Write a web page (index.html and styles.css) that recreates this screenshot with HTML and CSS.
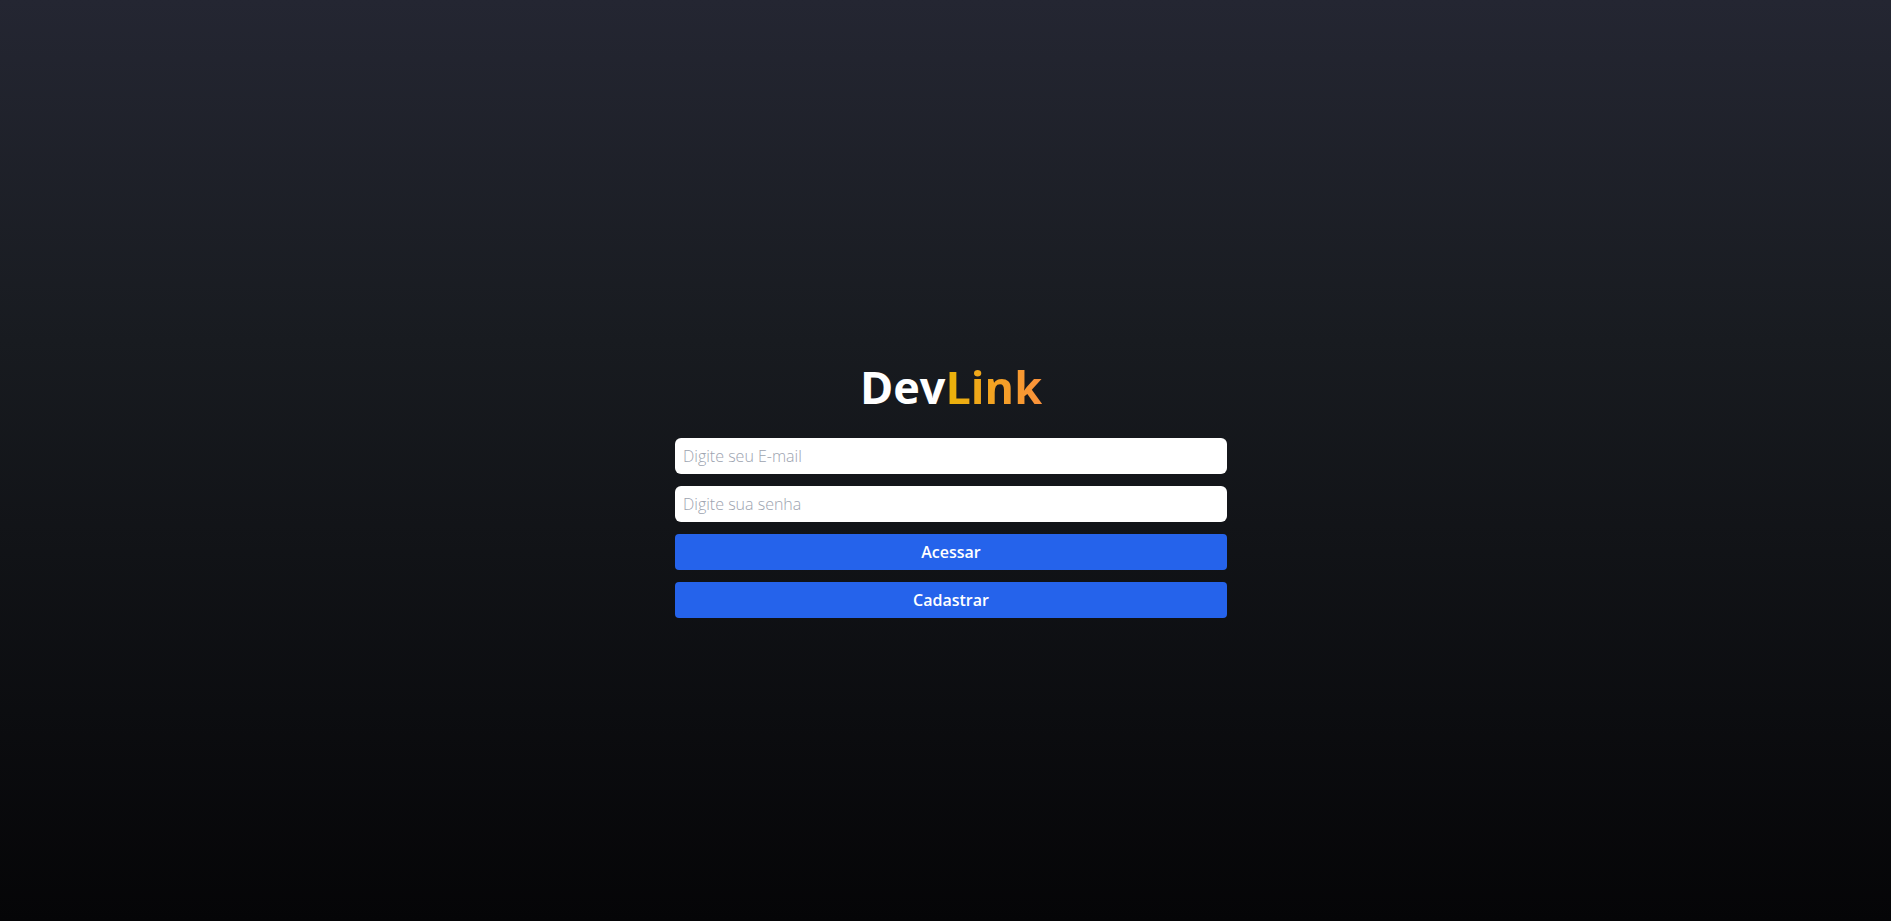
FILE: index.html
```
<!DOCTYPE html>
<html lang="pt-BR">
<head>
    <meta charset="UTF-8">
    <meta name="viewport" content="width=device-width, initial-scale=1.0">
    <title>DevLink</title>
    <link rel="stylesheet" href="styles.css">
</head>
<body>

<main class="login">
    <h1 class="logo">Dev<span>Link</span></h1>

    <form class="login-form">
        <input type="email" name="email" placeholder="Digite seu E-mail" aria-label="E-mail">
        <input type="password" name="password" placeholder="Digite sua senha" aria-label="Senha">
        <button type="submit">Acessar</button>
        <button type="button">Cadastrar</button>
    </form>
</main>

</body>
</html>
```

FILE: styles.css
```
* {
    box-sizing: border-box;
}

body {
    margin: 0;
    font-family: "Open Sans", "Noto Sans", sans-serif;
    font-size: 16px;
    line-height: 24px;
    background: linear-gradient(#242632, #181b20 37%, #050507);
}

.login {
    display: flex;
    flex-direction: column;
    align-items: center;
    justify-content: center;
    min-height: 100vh;
    padding: 60px 0 0 11px;
}

.logo {
    margin: 0 0 28px;
    color: white;
    font-size: 45px;
    font-weight: 700;
    line-height: 46px;
}

.logo span {
    background: linear-gradient(to right, #eab308, #fb923c);
    background-clip: text;
    -webkit-background-clip: text;
    color: transparent;
}

.login-form {
    display: flex;
    flex-direction: column;
    gap: 12px;
    width: 100%;
    max-width: 552px;
}

.login-form input,
.login-form button {
    height: 36px;
    padding: 0 8px;
    border: 0;
    font-family: inherit;
    font-size: 16px;
}

.login-form input {
    border-radius: 6px;
    background-color: white;
    font-weight: 300;
}

.login-form input::placeholder {
    color: #9ca3af;
}

.login-form button {
    border-radius: 4px;
    background-color: #2563eb;
    color: white;
    font-weight: 600;
    cursor: pointer;
}
```
